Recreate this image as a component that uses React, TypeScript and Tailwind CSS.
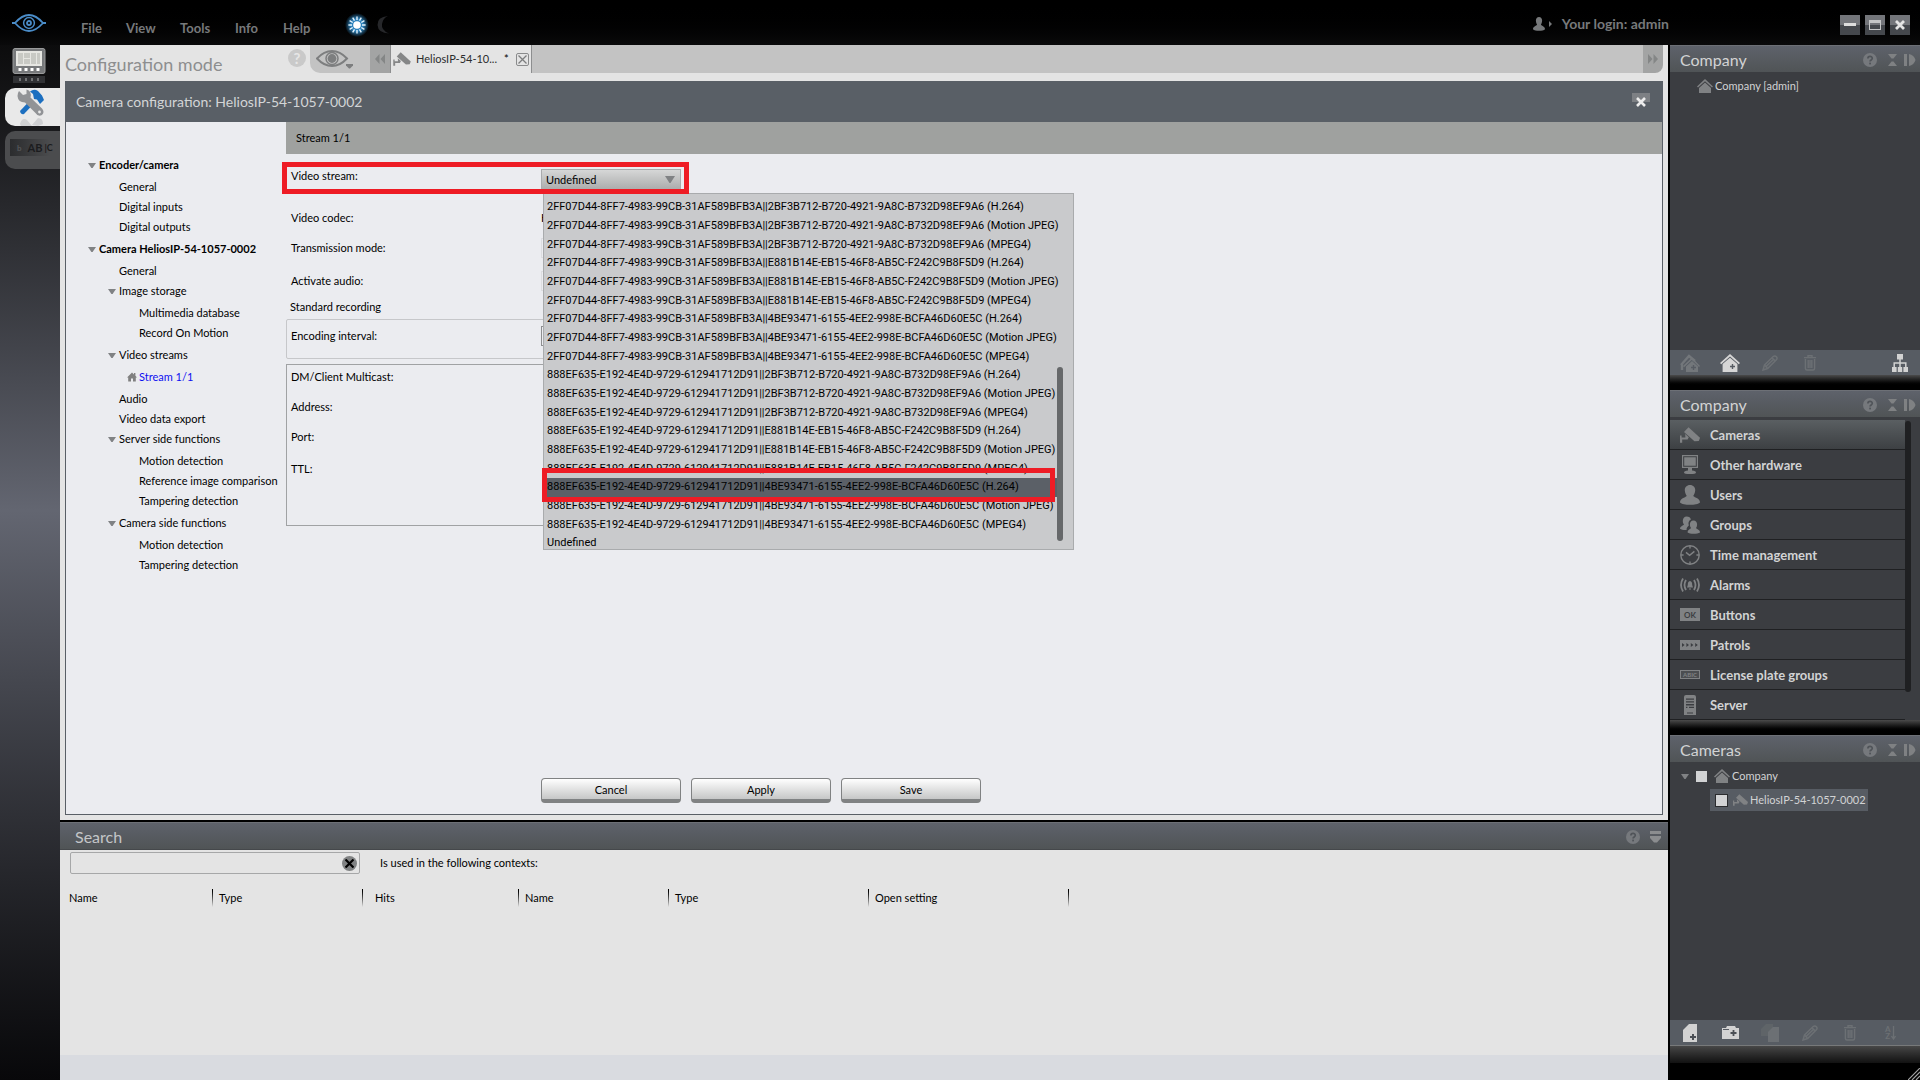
import type { ReactNode } from "react";

type IconProps = { className?: string };

const HelpIcon = ({ className = "" }: IconProps) => (
  <svg viewBox="0 0 16 16" className={className} aria-hidden="true">
    <circle cx="8" cy="8" r="8" fill="#76797d" />
    <path d="M5.6 6.2C5.6 3.2 10.6 3.2 10.6 6.1C10.6 8 8.1 7.9 8.1 9.8" fill="none" stroke="#505459" strokeWidth="1.9" />
    <rect x="7.1" y="11" width="2" height="2" fill="#505459" />
  </svg>
);

const HouseIcon = ({ className = "" }: IconProps) => (
  <svg viewBox="0 0 16 14" className={className} fill="currentColor" aria-hidden="true">
    <path d="M8 0L16 7.4L15 8.5L8 2.2L1 8.5L0 7.4Z" />
    <path d="M8 3.6L14 9V14H2V9Z" />
  </svg>
);

const SmallHouseIcon = ({ className = "" }: IconProps) => (
  <svg viewBox="0 0 10 10" className={className} fill="currentColor" aria-hidden="true">
    <path d="M5 0.5L7 2.4V1H8.4V3.7L10 5.4H8.8V9.5H6V6.5H4V9.5H1.2V5.4H0Z" />
  </svg>
);

const CameraIcon = ({ className = "" }: IconProps) => (
  <svg viewBox="0 0 20 16" className={className} fill="currentColor" aria-hidden="true">
    <path d="M8.5 0.3L20 10.8L18.8 14L14.5 14.3L4 5Z" />
    <path d="M5.2 7L8.8 10.3L7.6 12.6H2.2V15.8H0V8.6H1.6V10.6H5.4Z" />
  </svg>
);

const HouseAddIcon = ({ className = "", plus = "#575c63" }: IconProps & { plus?: string }) => (
  <svg viewBox="0 0 20 18" className={className} aria-hidden="true">
    <path d="M10 0L20 9L18.8 10.2L10 2.6L1.2 10.2L0 9Z" fill="currentColor" />
    <path d="M10 3.8L17.4 10V18H2.6V10Z" fill="currentColor" />
    <path d="M12.5 10V15M10 12.5H15" stroke={plus} strokeWidth="1.4" />
  </svg>
);

const HousesAddIcon = ({ className = "" }: IconProps) => (
  <svg viewBox="0 0 20 18" className={className} aria-hidden="true">
    <path d="M1 11L9 2L15 7M2 10V16" fill="none" stroke="currentColor" strokeWidth="2.4" />
    <path d="M12 3.5L20 12L19 13L12 5.8L4 13.2L3 12Z" fill="currentColor" />
    <path d="M12 7L18 12.5V18H6V12.5Z" fill="currentColor" />
    <path d="M13.5 11V16M11 13.5H16" stroke="#575c63" strokeWidth="1.4" />
  </svg>
);

const PencilIcon = ({ className = "" }: IconProps) => (
  <svg viewBox="0 0 16 16" className={className} fill="none" stroke="currentColor" strokeWidth="1.5" aria-hidden="true">
    <path d="M1 15L2.5 10L11.5 1.3Q13 0.4 14.4 1.8Q15.6 3.2 14.6 4.6L5.6 13.5Z" />
    <path d="M4 11.6L11.6 4.2M10 2.8L13 5.8M2.5 10L5.6 13.5" />
  </svg>
);

const TrashIcon = ({ className = "" }: IconProps) => (
  <svg viewBox="0 0 12 16" className={className} fill="none" stroke="currentColor" strokeWidth="1.4" aria-hidden="true">
    <path d="M0 2.6H12M4 2.4V0.8H8V2.4M1.4 4V13.5Q1.4 15 3 15H9Q10.6 15 10.6 13.5V4M4.2 5V13M6 5V13M7.8 5V13" />
  </svg>
);

const SitemapIcon = ({ className = "" }: IconProps) => (
  <svg viewBox="0 0 16 18" className={className} aria-hidden="true">
    <path d="M5 0H11V5.5H5ZM0 13H4.6V18H0ZM5.8 13H10.2V18H5.8ZM11.4 13H16V18H11.4Z" fill="currentColor" />
    <path d="M8 5V13M2.2 13V9H13.8V13" fill="none" stroke="currentColor" strokeWidth="1.5" />
  </svg>
);

const CollapseIcons = () => (
  <>
    <button aria-label="Help" className="h-3.5 w-3.5"><HelpIcon className="h-3.5 w-3.5" /></button>
    <button aria-label="Collapse" className="ml-[11px] h-3 w-[9px]">
      <svg viewBox="0 0 9 12" className="h-3 w-[9px]" fill="#7f8183"><path d="M0 0H9L5.5 4.5H3.5ZM0 12H9L5.5 7.5H3.5Z" /></svg>
    </button>
    <button aria-label="Dock" className="ml-[7px] h-3 w-3">
      <svg viewBox="0 0 12 12" className="h-3 w-3" fill="#7f8183"><path d="M0 0H3V12H0ZM5 0Q10 1 11.5 6Q10 11 5 12Z" /></svg>
    </button>
  </>
);

const PanelHeader = ({ title }: { title: string }) => (
  <header className="flex h-[27px] shrink-0 items-center border-t border-[#6d7076] bg-gradient-to-b from-[#5e626b] to-[#505456] pt-0.5 pr-1 pl-2.5">
    <h2 className="flex-1 text-[16px] leading-5 text-[#d2d3d4]">{title}</h2>
    <CollapseIcons />
  </header>
);

const Arrow = ({ className = "" }: IconProps) => (
  <svg viewBox="0 0 8 5" className={`h-[5px] w-2 shrink-0 ${className}`} fill="#808284" aria-hidden="true"><path d="M0 0H8L4.6 5H3.4Z" /></svg>
);

type Node = { label: string; children?: Node[]; active?: boolean };

const tree: Node[] = [
  { label: "Encoder/camera", children: [{ label: "General" }, { label: "Digital inputs" }, { label: "Digital outputs" }] },
  {
    label: "Camera HeliosIP-54-1057-0002",
    children: [
      { label: "General" },
      { label: "Image storage", children: [{ label: "Multimedia database" }, { label: "Record On Motion" }] },
      { label: "Video streams", children: [{ label: "Stream 1/1", active: true }] },
      { label: "Audio" },
      { label: "Video data export" },
      { label: "Server side functions", children: [{ label: "Motion detection" }, { label: "Reference image comparison" }, { label: "Tampering detection" }] },
      { label: "Camera side functions", children: [{ label: "Motion detection" }, { label: "Tampering detection" }] },
    ],
  },
];

const TreeList = ({ nodes, depth }: { nodes: Node[]; depth: number }) => (
  <ul className={depth === 0 ? "" : "my-0.5 pl-5"}>
    {nodes.map((n, i) => (
      <li key={i}>
        <a href="#" className={`flex h-5 items-center whitespace-nowrap ${depth === 0 ? "font-bold" : ""} ${n.active ? "text-[#0f0ff0]" : "text-black"}`}>
          <span className="flex w-3 shrink-0 items-center">
            {n.children && <Arrow className="ml-px" />}
            {n.active && <SmallHouseIcon className="h-2.5 w-2.5 text-[#808080]" />}
          </span>
          {n.label}
        </a>
        {n.children && <TreeList nodes={n.children} depth={depth + 1} />}
      </li>
    ))}
  </ul>
);

const devices = ["2FF07D44-8FF7-4983-99CB-31AF589BFB3A", "888EF635-E192-4E4D-9729-612941712D91"];
const profiles = ["2BF3B712-B720-4921-9A8C-B732D98EF9A6", "E881B14E-EB15-46F8-AB5C-F242C9B8F5D9", "4BE93471-6155-4EE2-998E-BCFA46D60E5C"];
const codecs = ["H.264", "Motion JPEG", "MPEG4"];
const streams = [
  ...devices.flatMap((d) => profiles.flatMap((p) => codecs.map((c) => `${d}||${p} (${c})`))),
  "Undefined",
];
const selectedStream = 15;

const StreamList = () => (
  <div className="absolute top-6 left-0.5 z-10 h-[357px] w-[531px] border border-[#a9abad] bg-[#c9cacc] pt-1 pb-[3px]">
    <ul role="listbox" aria-label="Video stream" className="h-full overflow-hidden font-[Roboto,sans-serif]">
      {streams.map((s, i) => (
        <li key={s} role="option" aria-selected={i === selectedStream} className={`mr-4 ml-[3px] h-[19px] leading-[17px] whitespace-nowrap nth-[3n]:h-[18px] ${i === selectedStream ? "bg-[#5b6067]" : ""}`}>
          {s}
        </li>
      ))}
    </ul>
    <div className="absolute top-[173px] right-2.5 h-[174px] w-1.5 rounded-sm bg-[#66686a]" />
    <div className="pointer-events-none absolute top-[274px] -left-0.5 h-[34px] w-[513px] border-5 border-[#ee1c25]" />
  </div>
);

const GreyButton = ({ children }: { children: ReactNode }) => (
  <button className="h-[25px] w-[140px] rounded-[4px] border border-b-4 border-[#808283] bg-gradient-to-b from-white to-[#c6c7c7] pt-0.5 leading-[18px] text-black">{children}</button>
);

const icon = {
  monitor: <path d="M2 0H18V13H12V15.5Q16 16 16 17.5Q16 19 10 19Q4 19 4 17.5Q4 16 8 15.5V13H2ZM3.2 1.2V11.8H16.8V1.2ZM4.2 2.2H15.8V10.8H4.2Z" />,
  user: <path d="M10 0C13.4 0 15.4 2.6 15.2 5.4C15 8.2 14 9.6 13.2 11C15 12.6 20 13.6 20 17.4C17 20.6 3 20.6 0 17.4C0 13.6 5 12.6 6.8 11C6 9.6 5 8.2 4.8 5.4C4.6 2.6 6.6 0 10 0Z" />,
};

const menu: { label: string; icon: ReactNode }[] = [
  { label: "Cameras", icon: <CameraIcon className="h-4 w-5" /> },
  { label: "Other hardware", icon: <svg viewBox="0 0 20 20" className="h-5 w-5" fill="currentColor">{icon.monitor}</svg> },
  { label: "Users", icon: <svg viewBox="0 0 20 20" className="h-5 w-5" fill="currentColor">{icon.user}</svg> },
  {
    label: "Groups",
    icon: (
      <svg viewBox="0 0 20 18" className="h-[18px] w-5" fill="currentColor">
        <path d="M6.5 0.5C9 0.5 10.6 1.8 10.9 3.6C8.6 4.6 8 7 8.8 9.6C7.4 11 6.4 12 6.6 14C4 14.2 1.4 13.8 0 12.8C0 10.6 3 9.8 4 8.6C2 6 2.4 0.8 6.5 0.5Z" />
        <path d="M13.4 4.6C17.4 4.6 18 9.6 16 12C17 13.4 20 13.8 20 16.4C17.6 18.2 9.6 18.2 7.6 16.4C7.6 13.8 10 13.4 11 12C9 9.6 9.6 4.6 13.4 4.6Z" />
      </svg>
    ),
  },
  {
    label: "Time management",
    icon: (
      <svg viewBox="0 0 20 20" className="h-5 w-5" fill="none" stroke="currentColor" strokeWidth="1.4">
        <circle cx="10" cy="10" r="9.2" />
        <path d="M6 7.4L9.6 10.4L14.4 6.4M10 1V3.6M10 16.4V19M1 10H3.6M16.4 10H19" />
      </svg>
    ),
  },
  {
    label: "Alarms",
    icon: (
      <svg viewBox="0 0 20 14" className="h-3.5 w-5" fill="none" stroke="currentColor" strokeWidth="1.8">
        <path d="M3 0.6Q-1 7 3 13.4M6 2Q3 7 6 12M17 0.6Q21 7 17 13.4M14 2Q17 7 14 12" />
        <path d="M10 3Q12.4 3.6 12.2 7L13 9.6H7L7.8 7Q7.6 3.6 10 3ZM9 10.4H11V11.6H9Z" fill="currentColor" stroke="none" />
      </svg>
    ),
  },
  { label: "Buttons", icon: <span className="flex h-[13px] w-5 items-center justify-center bg-current text-[8px] leading-none font-bold"><span className="text-[#3b3d41]">OK</span></span> },
  {
    label: "Patrols",
    icon: (
      <svg viewBox="0 0 20 10" className="h-2.5 w-5" fill="currentColor">
        <path fillRule="evenodd" d="M0 0H20V10H0ZM2 3V7L4.6 5ZM6.4 3V7L9 5ZM10.8 3V7L13.4 5ZM15.2 3V7L17.8 5Z" />
      </svg>
    ),
  },
  {
    label: "License plate groups",
    icon: (
      <span className="flex h-[9px] w-5 items-center justify-center border border-current bg-[#4c4e51] text-[6px] leading-none font-bold">
        <span>ABIC</span>
      </span>
    ),
  },
  {
    label: "Server",
    icon: (
      <svg viewBox="0 0 20 20" className="h-5 w-5" fill="currentColor">
        <path fillRule="evenodd" d="M6 0H14Q16 0 16 2V20H4V2Q4 0 6 0ZM6 3.4V4.8H14V3.4ZM6 6.2V7.6H14V6.2ZM6 9V10.4H14V9ZM6 11.8V13H7.4V11.8ZM9 11.8V13H14V11.8ZM7 17.6V18.4H13V17.6Z" />
      </svg>
    ),
  },
];

const searchColumns = [
  { label: "Name", w: "w-[144px]" },
  { label: "Type", w: "w-[150px]" },
  { label: "Hits", w: "w-[156px]" },
  { label: "Name", w: "w-[150px]" },
  { label: "Type", w: "w-[200px]" },
  { label: "Open setting", w: "w-[200px]" },
];

const windowButton = "flex h-5 w-5 items-center justify-center bg-gradient-to-b from-[#73757a] from-50% to-[#45484d] to-50%";

const TopBar = () => (
  <header className="flex h-[45px] shrink-0 items-center bg-gradient-to-b from-black to-[#0a0a0b]">
    <svg viewBox="0 0 34 18" className="mb-0 ml-3 h-[18px] w-[34px]" fill="none" stroke="#4a8cc8" aria-label="Logo">
      <path d="M0 9H3Q10 1 17 1Q24 1 31 9H34M3 9Q10 17 17 17Q24 17 31 9" strokeWidth="1.8" />
      <circle cx="17" cy="9" r="5.4" strokeWidth="1.5" />
      <circle cx="17" cy="9" r="2" strokeWidth="1.8" />
    </svg>
    <nav className="ml-[35px] flex pt-2.5 text-[13px] leading-4 font-bold text-[#77797b]">
      <a href="#" className="w-[45px]">File</a>
      <a href="#" className="w-[54px]">View</a>
      <a href="#" className="w-[55px]">Tools</a>
      <a href="#" className="w-12">Info</a>
      <a href="#" className="w-[62px]">Help</a>
    </nav>
    <button aria-label="Day mode" className="mt-1 h-6 w-6">
      <svg viewBox="0 0 24 24" className="h-6 w-6">
        <defs>
          <radialGradient id="glow"><stop offset="0.5" stopColor="#2d83bd" /><stop offset="1" stopColor="#2d83bd" stopOpacity="0" /></radialGradient>
        </defs>
        <circle cx="12" cy="12" r="12" fill="url(#glow)" />
        <circle cx="12" cy="12" r="3.8" fill="#fff" />
        <path d="M12 3.4V7M12 17V20.6M3.4 12H7M17 12H20.6M7.7 4.6L9.500 7.700M14.500 16.300L16.300 19.400M4.600 7.700L7.700 9.500M16.300 14.500L19.400 16.300M4.600 16.300L7.700 14.500M16.300 9.500L19.400 7.700M7.700 19.400L9.500 16.300M14.500 7.700L16.300 4.600" stroke="#e4f3fc" strokeWidth="1.4" />
      </svg>
    </button>
    <button aria-label="Night mode" className="mt-1 ml-2 h-[18px] w-3">
      <svg viewBox="0 0 12 18" className="h-[18px] w-3" fill="#26272a"><path d="M11 0Q0 1 0.5 9Q1 17 12 17.6Q4 14 5 8Q6 2 11 0Z" /></svg>
    </button>
    <div className="flex-1" />
    <button className="mt-[3px] mr-[171px] flex items-center text-[14px] leading-4 font-bold text-[#77797b]">
      <svg viewBox="0 0 20 20" className="h-3.5 w-3" preserveAspectRatio="none" fill="currentColor">{icon.user}</svg>
      <svg viewBox="0 0 3 6" className="mr-2.5 ml-1 h-1.5 w-[3px]" fill="currentColor"><path d="M0 0L3 3L0 6Z" /></svg>
      Your login: admin
    </button>
    <div className="mt-1 mr-2.5 flex gap-[5px]">
      <button aria-label="Minimize" className={windowButton}><span className="h-[3px] w-3 bg-[#dcdcdc]" /></button>
      <button aria-label="Maximize" className={windowButton}><span className="h-2.5 w-3 border border-t-3 border-[#c4c5c6]" /></button>
      <button aria-label="Close" className={windowButton}>
        <svg viewBox="0 0 10 10" className="h-2.5 w-2.5" stroke="#e4e4e4" strokeWidth="2.8"><path d="M1 1L9 9M9 1L1 9" /></svg>
      </button>
    </div>
  </header>
);

const ModeBar = () => (
  <nav className="flex w-[60px] shrink-0 flex-col bg-gradient-to-b from-[#0c0c0d] via-[#636671] via-45% to-[#08080a]">
    <button aria-label="Live mode" className="mt-[3px] ml-3 h-9 w-[34px]">
      <svg viewBox="0 0 34 36" className="h-9 w-[34px]">
        <rect x="1" y="0.5" width="32" height="25" rx="2" fill="#77797b" stroke="#9a9b9c" />
        <rect x="4" y="3" width="26" height="15" fill="#e6e6e2" />
        <path d="M6 5H11V16H6ZM12 5H18V10H12ZM12 11H18V16H12ZM19 5H24V16H19ZM25 5H28V16H25Z" fill="#c8c9c4" />
        <path d="M6.5 20H9.5V23H6.5ZM12.5 20H15.5V23H12.5ZM18.5 20H21.5V23H18.5ZM24.5 20H27.5V23H24.5Z" fill="#fff" />
        <rect x="1" y="28" width="32" height="7" fill="#303134" />
        <path d="M7 30H9V33H7ZM13 30H15V33H13ZM19 30H21V33H19ZM25 30H27V33H25Z" fill="#717274" />
      </svg>
    </button>
    <button aria-label="Configuration mode" className="mt-1 ml-[5px] flex h-[38px] items-start rounded-l-[10px] bg-[#e9e9e9] pl-3">
      <svg viewBox="0 0 28 38" className="h-[38px] w-7">
        <path d="M3 23L13 12.5L16.5 16L7 26Q4 27 3 23Z" fill="#1c6fc0" />
        <path d="M13 3.500Q17 0.500 21 3L25 7.500L27 12L23 16L20 11.500L17 11L16 6Z" fill="#1c6fc0" />
        <path d="M2 3L6 7L9.5 6L9.5 1.5Q15 3 13.500 9.500L25 20.500Q28 24 25 27Q21 29 18.500 25L8 14.500Q1 14.500 0.500 8Q0.500 5 2 3Z" fill="#919396" />
        <circle cx="22.5" cy="24" r="1.4" fill="#e9e9e9" />
        <path d="M3 36Q5 29 10 32L15 38H4ZM15 37L21 30Q26 30 26 36L21 38Z" fill="#cfd0d2" />
      </svg>
    </button>
    <button aria-label="License plate mode" className="mt-[5px] ml-[5px] flex h-[38px] items-start rounded-l-[10px] bg-[#4b4c4e] pt-2 pl-[5px]">
      <span className="flex h-[17px] w-10 items-center gap-0.5 bg-gradient-to-r from-[#2b2c2e] to-[#4b4c4e] pl-[7px] text-[11px] leading-none font-bold text-[#1b1c1e]">
        <span className="pr-1 text-[8px] text-[#55575a]">b</span>AB<span className="text-[9px]">|C</span>
      </span>
    </button>
  </nav>
);

const TabBar = () => (
  <div className="flex h-9 shrink-0 items-start">
    <h1 className="w-56 shrink-0 pt-2 pl-[5px] text-[18px] leading-[22px] whitespace-nowrap text-[#8d8e8f]">Configuration mode</h1>
    <button aria-label="Help" className="mt-1 ml-1 flex h-[18px] w-[18px] items-center justify-center rounded-full bg-[#c9c9c9] text-[15px] leading-none font-bold text-[#e6e6e6]">?</button>
    <button aria-label="Views" className="ml-1 flex h-7 w-[60px] shrink-0 items-center rounded-bl-[10px] bg-[#c3c3c3] pl-1.5">
      <svg viewBox="0 0 38 20" className="h-5 w-[38px]" fill="none" stroke="#7d7e7f">
        <path d="M1 9.5Q8 2 16 2Q24 2 31 9.5Q24 17 16 17Q8 17 1 9.5Z" strokeWidth="2" />
        <circle cx="16" cy="9.5" r="6" strokeWidth="1.5" />
        <circle cx="16" cy="9.5" r="4.4" fill="#7d7e7f" stroke="none" />
        <path d="M30 15H37V16.5L34 19.5H33L30 16.5Z" fill="#7d7e7f" stroke="none" />
      </svg>
    </button>
    <button aria-label="Previous tabs" className="flex h-7 w-5 shrink-0 items-center justify-center bg-[#a3a4a4]">
      <svg viewBox="0 0 10 10" className="h-2.5 w-2.5" fill="#848686"><path d="M4.5 0V10L0 5ZM10 0V10L5.5 5Z" /></svg>
    </button>
    <div className="flex h-7 w-[142px] shrink-0 items-center border-x border-[#8d8e8f] pl-0.5">
      <CameraIcon className="h-3.5 w-[18px] text-[#858687]" />
      <a href="#" className="ml-[5px] w-[88px] text-[11px] whitespace-nowrap text-[#2b2c2d]">HeliosIP-54-10...</a>
      <span className="w-3 text-[11px]">*</span>
      <button aria-label="Close tab" className="h-[13px] w-[13px] rounded-[2px] border border-[#8a8b8c] p-px">
        <svg viewBox="0 0 9 9" className="h-[9px] w-[9px]" stroke="#7d7e7f" strokeWidth="1.3"><path d="M0.5 0.5L8.5 8.5M8.5 0.5L0.5 8.5" /></svg>
      </button>
    </div>
    <div className="h-7 flex-1 bg-[#c3c3c3]" />
    <button aria-label="Next tabs" className="mr-[5px] flex h-7 w-5 items-center justify-center rounded-br-[8px] bg-[#a3a4a4]">
      <svg viewBox="0 0 10 10" className="h-2.5 w-2.5" fill="#848686"><path d="M0 0V10L4.5 5ZM5.5 0V10L10 5Z" /></svg>
    </button>
  </div>
);

const label = "w-[250px] shrink-0 pl-[5px]";

const CameraConfiguration = () => (
  <section className="mx-[5px] flex min-h-0 flex-1 flex-col border border-[#595f66] bg-[#ebecf0]">
    <header className="flex h-10 shrink-0 items-center bg-[#595f66] pr-3 pl-2.5">
      <h2 className="flex-1 text-[14px] leading-5 text-[#d3d5d6]">Camera configuration: HeliosIP-54-1057-0002</h2>
      <button aria-label="Close configuration" className="flex h-[18px] w-[18px] items-center justify-center bg-gradient-to-b from-[#7d8084] from-50% to-[#595f66] to-50%">
        <svg viewBox="0 0 10 10" className="h-2.5 w-2.5" stroke="#ececec" strokeWidth="2.6"><path d="M1 1L9 9M9 1L1 9" /></svg>
      </button>
    </header>
    <div className="flex min-h-0 flex-1">
      <nav className="w-[220px] shrink-0 pt-[33px] pl-[21px]"><TreeList nodes={tree} depth={0} /></nav>
      <form className="flex min-w-0 flex-1 flex-col" onSubmit={(e) => e.preventDefault()}>
        <h3 className="flex h-8 shrink-0 items-center bg-[#9fa19f] pl-2.5">Stream 1/1</h3>
        <div className="relative mt-[15px] flex h-6 items-start">
          <label htmlFor="stream" className={label}>Video stream:</label>
          <div className="pointer-events-none absolute -top-[7px] -left-1 z-20 h-8 w-[407px] border-5 border-[#ee1c25]" />
          <div className="relative ml-[5px] h-6">
            <select id="stream" defaultValue="Undefined" className="h-[21px] w-[140px] appearance-none border border-[#a9abad] bg-gradient-to-b from-[#d6d7d7] to-[#acadad] pl-1 outline-none">
              {streams.map((s) => <option key={s}>{s}</option>)}
            </select>
            <svg viewBox="0 0 10 7" className="pointer-events-none absolute top-[7px] right-1.5 h-[7px] w-2.5" fill="#808284"><path d="M0 0H10L5.5 7H4.5Z" /></svg>
            <StreamList />
          </div>
        </div>
        <div className="mt-[15px] flex h-5 items-center"><span className={label}>Video codec:</span><span className="ml-[5px]">H.264</span></div>
        <div className="mt-2.5 flex h-5 items-center"><label htmlFor="mode" className={label}>Transmission mode:</label><input id="mode" className="ml-[5px] h-5 w-[140px] border border-[#dcdde0]" /></div>
        <div className="mt-[13px] flex h-5 items-center"><label htmlFor="audio" className={label}>Activate audio:</label><input id="audio" className="ml-[5px] h-5 w-[140px] border border-[#dcdde0]" /></div>
        <fieldset className="mt-1.5">
          <legend className="mb-0.5 h-5 pl-1 leading-5">Standard recording</legend>
          <div className="flex h-10 w-[760px] items-center rounded-[2px] border border-[#c6c7ca] pb-1.5">
            <label htmlFor="interval" className="w-[249px] shrink-0 pl-1">Encoding interval:</label>
            <input id="interval" className="ml-[5px] h-5 w-[140px] border border-[#8d8e90]" />
          </div>
        </fieldset>
        <div className="mt-[5px] h-[162px] w-[760px] shrink-0 border border-[#a0a2a4] pt-0.5 pl-1">
          <p className="h-[30px] leading-5">DM/Client Multicast:</p>
          <p className="h-[30px] leading-5">Address:</p>
          <p className="h-8 leading-5">Port:</p>
          <p className="leading-5">TTL:</p>
        </div>
        <div className="flex-1" />
        <div className="mb-[11px] ml-[255px] flex gap-2.5">
          <GreyButton>Cancel</GreyButton>
          <GreyButton>Apply</GreyButton>
          <GreyButton>Save</GreyButton>
        </div>
      </form>
    </div>
  </section>
);

const SearchPanel = () => (
  <section className="flex h-[260px] shrink-0 flex-col border-t-2 border-black">
    <header className="flex h-7 shrink-0 items-center border-t border-b border-t-[#6d7076] border-b-[#45484b] bg-gradient-to-b from-[#5e626b] to-[#505456] pt-0.5 pr-[7px] pl-[15px]">
      <h2 className="flex-1 text-[16px] leading-5 text-[#c4c6c8]">Search</h2>
      <button aria-label="Help" className="h-3.5 w-3.5"><HelpIcon className="h-3.5 w-3.5" /></button>
      <button aria-label="Minimize search" className="ml-2.5 h-3 w-[11px]">
        <svg viewBox="0 0 11 12" className="h-3 w-[11px]" fill="#8b8d8f"><path d="M0 0H11V3H0ZM0 5H11V7L7 11.5H4L0 7Z" /></svg>
      </button>
    </header>
    <div className="mt-0.5 flex h-[22px] items-center pl-2.5">
      <div className="flex h-[22px] w-[290px] items-center rounded-[2px] border border-[#a6a7a8] pr-0.5">
        <input id="search" aria-label="Search" className="h-full min-w-0 flex-1 bg-transparent px-1 outline-none" />
        <button aria-label="Clear search" className="h-[15px] w-[15px] rounded-full bg-[#808283] p-[3px]">
          <svg viewBox="0 0 9 9" className="h-[9px] w-[9px]" stroke="#000" strokeWidth="2.2"><path d="M0.5 0.5L8.5 8.5M8.5 0.5L0.5 8.5" /></svg>
        </button>
      </div>
      <label htmlFor="search" className="ml-5">Is used in the following contexts:</label>
    </div>
    <table className="mt-[15px] ml-[9px] w-[1000px] table-fixed border-collapse self-start text-left">
      <thead>
        <tr>
          {searchColumns.map((c, i) => (
            <th key={i} scope="col" className={`${c.w} p-0 font-normal`}>
              <span className="flex h-[18px] items-center justify-between">
                <span className={i === 0 ? "" : i === 2 ? "pl-3" : "pl-1.5"}>{c.label}</span>
                <span className="h-[18px] w-px bg-gradient-to-b from-black to-[#e4e4e4]" />
              </span>
            </th>
          ))}
        </tr>
      </thead>
    </table>
    <div className="flex-1" />
    <footer className="h-[25px] bg-[#d9dbe0]" />
  </section>
);

const toolBar = "flex h-[25px] shrink-0 items-center bg-[#575c63]";

const RightPanels = () => (
  <aside className="flex w-[252px] shrink-0 flex-col border-l-2 border-black bg-[#3b3d41] text-[#d2d3d4]">
    <section className="flex h-[345px] shrink-0 flex-col">
      <PanelHeader title="Company" />
      <a href="#" className="mt-1 flex h-5 items-center pl-[27px]"><HouseIcon className="mr-0.5 h-3.5 w-4 text-[#808284]" />Company [admin]</a>
      <div className="flex-1" />
      <div className={`${toolBar} pr-3 pl-2.5`}>
        <button aria-label="Add company group" className="mr-5"><HousesAddIcon className="h-[18px] w-5 text-[#73777b]" /></button>
        <button aria-label="Add company" className="mr-[22px]"><HouseAddIcon className="h-[18px] w-5 text-[#d6d6d6]" /></button>
        <button aria-label="Edit" className="mr-[26px]"><PencilIcon className="h-4 w-4 text-[#6c7074]" /></button>
        <button aria-label="Delete"><TrashIcon className="h-4 w-3 text-[#6c7074]" /></button>
        <span className="flex-1" />
        <button aria-label="Hierarchy"><SitemapIcon className="h-[18px] w-4 text-[#d2d2d2]" /></button>
      </div>
      <div className="h-[15px] shrink-0 bg-gradient-to-b from-[#4b4b4b] to-black to-75%" />
    </section>
    <section className="flex h-[345px] shrink-0 flex-col">
      <PanelHeader title="Company" />
      <div className="mt-[3px] flex">
        <ul className="flex-1">
          {menu.map((m, i) => (
            <li key={m.label}>
              <a href="#" className={`flex h-[30px] items-center border-b border-[#1f2022] pl-2.5 text-[13px] font-bold ${i === 0 ? "bg-gradient-to-b from-[#5a5f62] to-[#3d4043]" : ""}`}>
                <span className="mr-2.5 flex w-5 justify-center text-[#808284]">{m.icon}</span>
                {m.label}
              </a>
            </li>
          ))}
        </ul>
        <div className="mt-px mr-[9px] h-[271px] w-1.5 rounded-[3px] bg-[#1f2022]" />
      </div>
      <div className="min-h-0 flex-1 bg-gradient-to-b from-[#4b4b4b] to-black to-80%" />
    </section>
    <section className="flex min-h-0 flex-1 flex-col">
      <PanelHeader title="Cameras" />
      <div className="mt-1 flex h-5 items-center pl-[11px]">
        <Arrow />
        <input id="company" type="checkbox" className="mr-[7px] ml-[7px] h-[11px] w-[11px] appearance-none bg-[#d2d3d4]" />
        <label htmlFor="company" className="flex items-center"><HouseIcon className="mr-0.5 h-3.5 w-4 text-[#808284]" />Company</label>
      </div>
      <div className="mt-[3px] ml-10 flex h-[22px] w-[158px] items-center bg-[#575c63] pl-[5px]">
        <input id="helios" type="checkbox" className="h-[13px] w-[13px] appearance-none border border-[#2b2c2e] bg-[#d2d3d4]" />
        <label htmlFor="helios" className="ml-[5px] flex items-center whitespace-nowrap"><CameraIcon className="mr-0.5 h-3 w-[15px] text-[#808284]" />HeliosIP-54-1057-0002</label>
      </div>
      <div className="flex-1" />
      <div className={`${toolBar} pl-[13px] text-[#6c7074]`}>
        <button aria-label="New camera" className="mr-[25px]">
          <svg viewBox="0 0 14 18" className="h-[18px] w-3.5"><path d="M6 0H14V18H0V6Z" fill="#d2d2d2" /><path d="M10 10V16M7 13H13" stroke="#4b4f55" strokeWidth="2" /></svg>
        </button>
        <button aria-label="New group" className="mr-[22px]">
          <svg viewBox="0 0 17 13" className="h-[13px] w-[17px]"><path d="M0 2H4L5 0H13L14 2H17V13H0Z" fill="#d2d2d2" /><path d="M1 3.5H7" stroke="#575c63" /><path d="M11.5 4V10M8.5 7H14.5" stroke="#4b4f55" strokeWidth="1.8" /></svg>
        </button>
        <button aria-label="Copy" className="mr-[23px]">
          <svg viewBox="0 0 18 18" className="h-[18px] w-[18px]"><path d="M5 0H12V12H0V5Z" fill="#5f6468" /><path d="M12 3H18V18H7V8Z" fill="currentColor" /></svg>
        </button>
        <button aria-label="Edit" className="mr-[26px]"><PencilIcon className="h-4 w-4" /></button>
        <button aria-label="Delete" className="mr-[29px]"><TrashIcon className="h-4 w-3" /></button>
        <button aria-label="Sort" className="flex items-center">
          <span className="flex flex-col text-[8px] leading-[7px] font-bold"><span>A</span><span>Z</span></span>
          <svg viewBox="0 0 5 14" className="h-3.5 w-[5px]" fill="none" stroke="currentColor" strokeWidth="1.3"><path d="M2.5 0V13M0.5 10L2.5 13L4.5 10" /></svg>
        </button>
      </div>
      <div className="flex h-[35px] shrink-0 items-end justify-end border-t border-[#77797a] bg-gradient-to-b from-[#474747] via-[#121212] via-50% to-black to-51%">
        <svg viewBox="0 0 12 12" className="h-3 w-3" stroke="#a4a4a4" strokeWidth="1.2"><path d="M0 12L12 0M4 12L12 4M8 12L12 8" /></svg>
      </div>
    </section>
  </aside>
);

export default function App() {
  return (
    <div className="flex h-screen flex-col overflow-hidden bg-black font-[Lato,sans-serif] text-[11px] leading-[14px] text-black">
      <TopBar />
      <div className="flex min-h-0 flex-1">
        <ModeBar />
        <main className="flex min-w-0 flex-1 flex-col bg-[#e4e4e4]">
          <TabBar />
          <CameraConfiguration />
          <div className="h-[5px] shrink-0" />
          <SearchPanel />
        </main>
        <RightPanels />
      </div>
    </div>
  );
}
